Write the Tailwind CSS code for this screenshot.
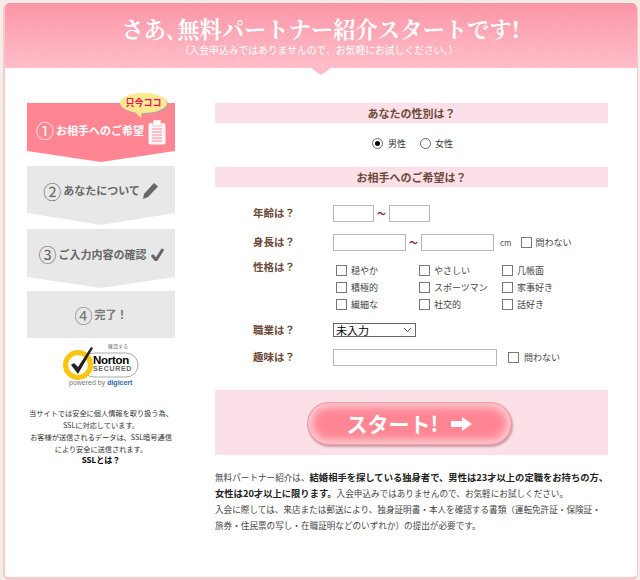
<!DOCTYPE html>
<html lang="ja">
  <head>
    <meta charset="UTF-8" />
    <title>無料パートナー紹介</title>
    <script src="https://cdn.jsdelivr.net/npm/@tailwindcss/browser@4"></script>
  </head>
  <body class="bg-[#f2eee6] font-['Noto_Sans_CJK_JP',sans-serif] text-[#333] overflow-hidden">
    <div class="w-[640px] h-[580px] pt-[3px] pl-[3px] overflow-hidden">
      <div class="w-[635px] h-[577px] rounded-[6px] border-l-[2px] border-r-[1px] border-b-[3px] border-[#fbc6d0] bg-white overflow-hidden">
        <!-- header -->
        <div class="relative h-[65px] -ml-[2px] -mr-px bg-[repeating-linear-gradient(135deg,#ffffff12_0_1px,transparent_1px_3px),linear-gradient(#fb93a5,#ffbcc7)] text-center text-white">
          <h1 class="pt-[11px] text-[22.300px] leading-[28px] font-bold font-['Noto_Serif_CJK_JP','Liberation_Serif','Noto_Sans_CJK_JP',serif]">さあ､無料パートナー紹介スタートです!</h1>
          <p class="mt-[2px] pr-[3px] text-[9.800px] leading-[13px]">（入会申込みではありませんので、お気軽にお試しください。）</p>
        </div>
        <div class="relative h-0">
          <div class="absolute left-[306px] top-0 w-0 h-0 border-x-[10px] border-x-transparent border-t-[7px] border-t-[#ffbcc7]"></div>
        </div>

        <div class="flex pt-[35px]">
          <!-- steps -->
          <div class="w-[148px] ml-[22px] shrink-0">
            <div class="relative h-[48px] bg-[#ff8593] flex items-center pt-[6px] pl-[9px] text-white font-bold text-[11px]">
              <span class="text-[18px] font-normal leading-none mr-[2px]">①</span>お相手へのご希望
              <svg class="ml-[4px] mt-[4px]" width="18" height="25" viewBox="0 0 18 25"><rect x="0.500" y="3" width="17" height="21.500" rx="2" fill="#fff6f7"/><rect x="5" y="0" width="8" height="6" fill="#fff" stroke="#ff8593" stroke-width="0.500"/><path d="M4 9h10M4 12h10M4 15h10M4 18h10M4 21h10" stroke="#ff8593" stroke-width="1"/></svg>
              <div class="absolute left-[93px] -top-[10px] w-[47px] h-[20px] rounded-[50%] bg-[#fbe98f] shadow-[1px_1px_1px_#aaa] text-[#e4145a] text-[9px] leading-[20px] text-center font-bold">只今ココ</div>
              <div class="absolute left-[107px] top-[8px] w-0 h-0 border-l-[7px] border-l-transparent border-r-[1px] border-r-transparent border-t-[7px] border-t-[#fbe98f]"></div>
            </div>
            <div class="h-[11px] bg-[#ff8593] [clip-path:polygon(0_0,100%_0,50%_100%)]"></div>

            <div class="mt-[4px] h-[47px] bg-[#e8e8e8] flex items-center justify-center pt-[2px] text-[#666] font-bold text-[11px]">
              <span class="text-[18px] font-normal leading-none mr-[2px]">②</span>あなたについて
              <svg class="ml-[2px]" width="17" height="18" viewBox="0 0 17 18"><path d="M12 1l4 3.500L6 15l-5 2 1-5z" fill="#666"/></svg>
            </div>
            <div class="h-[12px] bg-[#e8e8e8] [clip-path:polygon(0_0,100%_0,50%_100%)]"></div>

            <div class="mt-[4px] h-[48px] bg-[#e8e8e8] flex items-center justify-center pt-[2px] text-[#666] font-bold text-[11px]">
              <span class="text-[18px] font-normal leading-none mr-[2px]">③</span>ご入力内容の確認
              <svg class="ml-[4px]" width="13" height="13" viewBox="0 0 13 13"><path d="M1 7l4 5L12 1" fill="none" stroke="#666" stroke-width="3"/></svg>
            </div>
            <div class="h-[11px] bg-[#e8e8e8] [clip-path:polygon(0_0,100%_0,50%_100%)]"></div>

            <div class="mt-[3px] h-[47px] bg-[#e8e8e8] flex items-center justify-center text-[#777] font-bold text-[11px]">
              <span class="text-[18px] font-normal leading-none mr-[2px]">④</span>完了！
            </div>

            <!-- norton badge -->
            <div class="relative h-[69px]">
              <svg class="absolute left-[33px] top-[4px]" width="82" height="40" viewBox="0 0 82 40">
                <rect x="22" y="11" width="56" height="24" rx="12" fill="#fff" stroke="#aaa" stroke-width="1"/>
                <circle cx="18" cy="23" r="12.500" fill="#fff" stroke="#fbc40e" stroke-width="5"/>
                <path d="M11 23l3-2 4 4L31 5l2 1L18 32z" fill="#222"/>
              </svg>
              <span class="absolute left-[81px] top-[4px] text-[5px] leading-[7px] text-[#666]">確認する</span>
              <span class="absolute left-[66px] top-[15px] text-[11.500px] leading-[14px] font-bold text-black font-['Liberation_Sans',sans-serif] tracking-[-0.3px]">Norton</span>
              <span class="absolute left-[66px] top-[26px] text-[7px] leading-[10px] font-bold text-[#666] font-['Liberation_Sans',sans-serif] tracking-[0.7px]">SECURED</span>
              <span class="absolute left-[42px] top-[40px] text-[7px] leading-[10px] text-[#777] font-['Liberation_Sans',sans-serif]">powered by <b class="text-[#2a63a8]">digicert</b></span>
            </div>

            <div class="text-center text-[7.200px] leading-[12px] text-[#333] whitespace-nowrap">
              <p>当サイトでは安全に個人情報を取り扱う為、</p>
              <p>SSLに対応しています。</p>
              <p>お客様が送信されるデータは、SSL暗号通信</p>
              <p>により安全に送信されます。</p>
              <p class="font-bold text-[8px] leading-[10px] text-black">SSLとは？</p>
            </div>
          </div>

          <!-- form -->
          <div class="w-[393px] ml-[40px] shrink-0">
            <h2 class="h-[20px] bg-[#fbe0e7] text-center text-[11px] leading-[20px] font-bold text-[#6b4a3a]">あなたの性別は？</h2>
            <div class="h-[44px] flex items-center justify-center text-[9px] pl-[2px] pb-[3px]">
              <span class="w-[11px] h-[11px] rounded-full border border-[#666] flex items-center justify-center mr-[5px]"><span class="w-[5px] h-[5px] rounded-full bg-black"></span></span>男性
              <span class="w-[11px] h-[11px] rounded-full border border-[#666] ml-[14px] mr-[4px]"></span>女性
            </div>
            <h2 class="h-[20px] bg-[#fbe0e7] text-center text-[11px] leading-[20px] font-bold text-[#6b4a3a]">お相手へのご希望は？</h2>

            <div class="mt-[18px] pl-[38px] text-[9px]">
              <div class="flex items-center h-[17px]">
                <span class="w-[80px] -mt-[1px] font-bold text-[10.500px] text-[#6b4a3a]">年齢は？</span>
                <span class="w-[41px] h-[17px] border border-[#b5bac0]"></span>
                <span class="w-[15px] text-center text-[#8a1040] font-bold">〜</span>
                <span class="w-[41px] h-[17px] border border-[#b5bac0]"></span>
              </div>
              <div class="flex items-center h-[17px] mt-[12px]">
                <span class="w-[80px] -mt-[1px] font-bold text-[10.500px] text-[#6b4a3a]">身長は？</span>
                <span class="w-[73px] h-[17px] border border-[#b5bac0]"></span>
                <span class="w-[15px] text-center text-[#8a1040] font-bold">〜</span>
                <span class="w-[73px] h-[17px] border border-[#b5bac0]"></span>
                <span class="ml-[6px] text-[8px] text-[#555]">cm</span>
                <span class="w-[11px] h-[11px] border border-[#777] ml-[9px] mr-[4px]"></span><span class="text-[#444]">問わない</span>
              </div>
              <div class="flex mt-[8px] h-[58px]">
                <span class="w-[83px] font-bold text-[10.500px] text-[#6b4a3a] leading-[15px]">性格は？</span>
                <div class="mt-[3px] grid grid-cols-[83px_83px_82px] auto-rows-[17px] items-center text-[#444]">
                  <label class="flex items-center gap-[4px]"><span class="w-[11px] h-[11px] border border-[#777]"></span>穏やか</label>
                  <label class="flex items-center gap-[4px]"><span class="w-[11px] h-[11px] border border-[#777]"></span>やさしい</label>
                  <label class="flex items-center gap-[4px]"><span class="w-[11px] h-[11px] border border-[#777]"></span>几帳面</label>
                  <label class="flex items-center gap-[4px]"><span class="w-[11px] h-[11px] border border-[#777]"></span>積極的</label>
                  <label class="flex items-center gap-[4px]"><span class="w-[11px] h-[11px] border border-[#777]"></span>スポーツマン</label>
                  <label class="flex items-center gap-[4px]"><span class="w-[11px] h-[11px] border border-[#777]"></span>家事好き</label>
                  <label class="flex items-center gap-[4px]"><span class="w-[11px] h-[11px] border border-[#777]"></span>繊細な</label>
                  <label class="flex items-center gap-[4px]"><span class="w-[11px] h-[11px] border border-[#777]"></span>社交的</label>
                  <label class="flex items-center gap-[4px]"><span class="w-[11px] h-[11px] border border-[#777]"></span>話好き</label>
                </div>
              </div>
              <div class="flex items-center h-[14px] mt-[6px]">
                <span class="w-[80px] font-bold text-[10.500px] text-[#6b4a3a]">職業は？</span>
                <span class="w-[83px] h-[14px] border border-[#666] flex items-center justify-between pl-[2px] pr-[4px] text-[11px] text-black leading-none">未入力
                  <svg width="7" height="4" viewBox="0 0 7 4"><path d="M0 0l3.500 3.500L7 0" fill="none" stroke="#555"/></svg>
                </span>
              </div>
              <div class="flex items-center h-[17px] mt-[12px]">
                <span class="w-[80px] -mt-[1px] font-bold text-[10.500px] text-[#6b4a3a]">趣味は？</span>
                <span class="w-[164px] h-[17px] border border-[#b5bac0]"></span>
                <span class="w-[11px] h-[11px] border border-[#777] ml-[11px] mr-[5px] -mt-[1px]"></span><span class="text-[#444]">問わない</span>
              </div>
            </div>

            <!-- start button -->
            <div class="mt-[24px] h-[65px] bg-[#fbe0e7] flex items-start justify-center pt-[12px] pr-[4px]">
              <div class="w-[205px] h-[43px] rounded-full border border-[#f39aa5] bg-[#ff8593] shadow-[inset_0_0_9px_4px_#ffd0d6,1px_2px_2px_#c9a0a8] flex items-center justify-center text-white font-bold text-[21px]">
                スタート!
                <svg class="ml-[13px]" width="21" height="14" viewBox="0 0 21 14"><path d="M0 4h11V0l10 7-10 7v-4H0z" fill="#fff"/></svg>
              </div>
            </div>

            <div class="mt-[14px] text-[8.600px] leading-[16px] text-[#444] whitespace-nowrap">
              <p>無料パートナー紹介は、<b class="text-[9.300px] text-[#222]">結婚相手を探している独身者で、男性は23才以上の定職をお持ちの方、</b></p>
              <p><b class="text-[9.300px] text-[#222]">女性は20才以上に限ります。</b>入会申込みではありませんので、お気軽にお試しください。</p>
              <p>入会に際しては、来店または郵送により、独身証明書・本人を確認する書類（運転免許証・保険証・</p>
              <p>旅券・住民票の写し・在職証明などのいずれか）の提出が必要です。</p>
            </div>
          </div>
        </div>
      </div>
    </div>
  </body>
</html>
